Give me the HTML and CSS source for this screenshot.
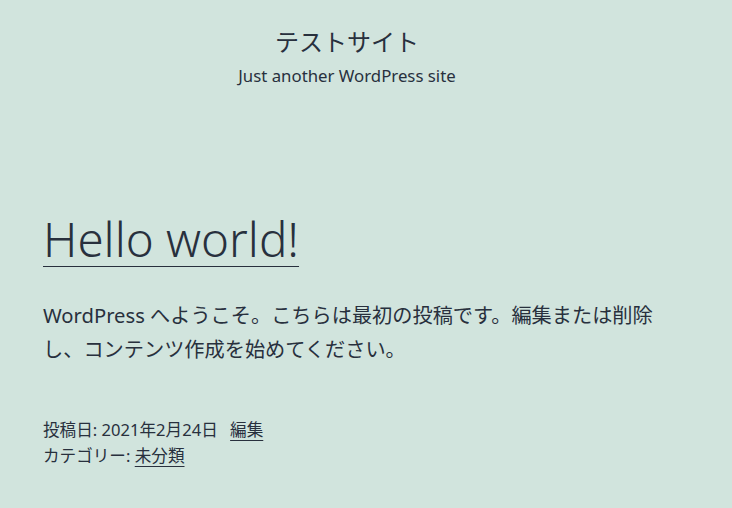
FILE: index.html
```html
<!DOCTYPE html>
<html lang="ja">
<head>
    <meta charset="utf-8">
    <title>テストサイト</title>
    <link rel="stylesheet" href="styles.css">
</head>
<body>

    <header class="site-header">
        <p class="site-title">テストサイト</p>
        <p class="site-description">Just another WordPress site</p>
    </header>

    <main class="site-main">
        <article class="post">
            <h1 class="entry-title"><a href="#">Hello world!</a></h1>
            <div class="entry-content">
                <p>WordPress へようこそ。こちらは最初の投稿です。編集または削除し、コンテンツ作成を始めてください。</p>
            </div>
            <footer class="entry-footer">
                <div class="posted-on">投稿日: 2021年2月24日 <a href="#" class="edit-link">編集</a></div>
                <div class="cat-links">カテゴリー: <a href="#">未分類</a></div>
            </footer>
        </article>
    </main>

</body>
</html>
```

FILE: styles.css
```css
html, body {
    margin: 0;
    padding: 0;
}
body {
    background-color: #d1e4dd;
    color: #28303d;
    font-family: "Noto Sans", "Noto Sans CJK JP", sans-serif;
}
a {
    color: #28303d;
    text-decoration: underline;
    text-decoration-thickness: 1px;
    text-underline-offset: 4px;
}
.site-header {
    text-align: center;
    padding: 26px 38px 0 0;
}
.site-title {
    margin: 0;
    font-size: 24px;
    line-height: 32px;
}
.site-description {
    margin: 6px 0 0;
    font-size: 16.8px;
    line-height: 24px;
}
.site-main {
    padding: 123px 43px 0;
}
.entry-title {
    margin: 0;
    font-weight: 300;
    font-size: 47.5px;
    line-height: 56px;
}
.entry-title a {
    text-underline-offset: 9px;
}
.entry-content p {
    margin: 31px 0 0;
    max-width: 625px;
    font-size: 20.2px;
    line-height: 34px;
}
.entry-footer {
    margin-top: 51px;
    font-size: 16.6px;
    line-height: 26px;
}
.edit-link {
    margin-left: 8px;
}
```
